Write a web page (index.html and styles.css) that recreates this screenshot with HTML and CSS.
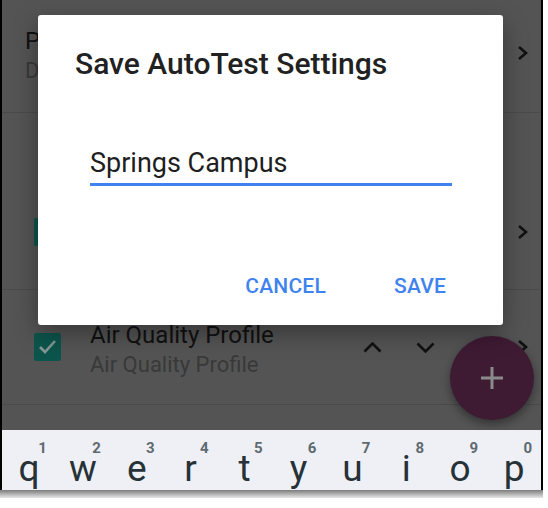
FILE: index.html
```html
<!DOCTYPE html>
<html>
<head>
  <title>Save AutoTest Settings</title>
  <link rel="stylesheet" href="styles.css">
</head>
<body>
  <div class="device">
    <div class="screen">
      <div class="list">
        <div class="row row-top">
          <div class="row-text">
            <div class="row-title">Particle Profile</div>
            <div class="row-sub">Default Profile</div>
          </div>
          <svg class="chevron" width="12" height="16" viewBox="0 0 12 16"><polyline points="2,2 9,8 2,14"/></svg>
        </div>
        <div class="group">
          <div class="row">
            <div class="check"><svg width="27" height="28" viewBox="0 0 27 28"><polyline points="6,14 11,19 21,8"/></svg></div>
            <div class="row-text">
              <div class="row-title">Temperature Profile</div>
              <div class="row-sub">Temperature Profile</div>
            </div>
            <svg class="chevron" width="12" height="16" viewBox="0 0 12 16"><polyline points="2,2 9,8 2,14"/></svg>
          </div>
        </div>
        <div class="row row-aq">
          <div class="check"><svg width="27" height="28" viewBox="0 0 27 28"><polyline points="6,14 11,19 21,8"/></svg></div>
          <div class="row-text">
            <div class="row-title">Air Quality Profile</div>
            <div class="row-sub">Air Quality Profile</div>
          </div>
          <svg class="arrow" width="19" height="11" viewBox="0 0 19 11"><polyline points="1.5,9.5 9.5,1.5 17.5,9.5"/></svg>
          <svg class="arrow arrow-down" width="19" height="11" viewBox="0 0 19 11"><polyline points="1.5,1.5 9.5,9.5 17.5,1.5"/></svg>
          <svg class="chevron" width="12" height="16" viewBox="0 0 12 16"><polyline points="2,2 9,8 2,14"/></svg>
        </div>
        <div class="row row-last"></div>
      </div>

      <div class="fab">
        <svg width="22" height="22" viewBox="0 0 22 22"><line x1="11" y1="0" x2="11" y2="22"/><line x1="0" y1="11" x2="22" y2="11"/></svg>
      </div>

      <div class="dialog">
        <h2 class="dialog-title">Save AutoTest Settings</h2>
        <div class="field">Springs Campus</div>
        <div class="actions">
          <span class="btn">CANCEL</span>
          <span class="btn">SAVE</span>
        </div>
      </div>
    </div>

    <div class="keyboard">
      <div class="key"><span class="num">1</span>q</div>
      <div class="key"><span class="num">2</span>w</div>
      <div class="key"><span class="num">3</span>e</div>
      <div class="key"><span class="num">4</span>r</div>
      <div class="key"><span class="num">5</span>t</div>
      <div class="key"><span class="num">6</span>y</div>
      <div class="key"><span class="num">7</span>u</div>
      <div class="key"><span class="num">8</span>i</div>
      <div class="key"><span class="num">9</span>o</div>
      <div class="key"><span class="num">0</span>p</div>
    </div>
  </div>
  <div class="kb-shadow"></div>
</body>
</html>
```

FILE: styles.css
```css
body {
  margin: 0;
  background-color: #ffffff;
  font-family: Roboto, "Liberation Sans", sans-serif;
}

.device {
  width: 539px;
  border-left: 2px solid #000;
  border-right: 2px solid #000;
}

.screen {
  position: relative;
  height: 430px;
  background-color: #545454;
  overflow: hidden;
}

.row {
  display: flex;
  align-items: center;
  border-bottom: 1px solid #4a4a4a;
  padding-right: 12px;
}

.row-top {
  height: 112px;
  padding-left: 23px;
}

.row-top .chevron {
  margin-bottom: 6px;
}

.group {
  height: 176px;
  border-bottom: 1px solid #4a4a4a;
  display: flex;
  flex-direction: column;
  justify-content: flex-end;
}

.group .row {
  height: 114px;
  border-bottom: none;
}

.row-aq {
  height: 114px;
}

.row-aq .row-text {
  padding-top: 6px;
}

.row-last {
  height: 30px;
  border-bottom: none;
}

.row-text {
  flex: 1;
}

.row-title {
  font-size: 24px;
  line-height: 30px;
  color: #111;
}

.row-sub {
  font-size: 22px;
  line-height: 30px;
  color: #393939;
}

.check {
  width: 27px;
  height: 28px;
  margin: 0 29px 0 32px;
  background-color: #0c554c;
  border-radius: 2px;
}

.check svg polyline {
  fill: none;
  stroke: #849592;
  stroke-width: 2.6;
}

.chevron polyline,
.arrow polyline {
  fill: none;
  stroke: #111;
  stroke-width: 2.6;
}

.chevron {
  margin-left: 4px;
}

.arrow {
  margin-right: 34px;
}

.arrow-down {
  margin-right: 78px;
}

.fab {
  position: absolute;
  left: 448px;
  top: 336px;
  width: 84px;
  height: 84px;
  border-radius: 50%;
  background-color: #3e1a33;
  box-shadow: 0 4px 10px rgba(0, 0, 0, 0.4);
  display: flex;
  align-items: center;
  justify-content: center;
}

.fab svg line {
  stroke: #8a8a8a;
  stroke-width: 3;
}

.dialog {
  position: absolute;
  left: 36px;
  top: 15px;
  width: 465px;
  height: 310px;
  box-sizing: border-box;
  padding: 31px 57px 0 37px;
  background-color: #fff;
  border-radius: 3px;
  box-shadow: 0 8px 24px rgba(0, 0, 0, 0.35);
}

.dialog-title {
  margin: 0;
  font-size: 30px;
  line-height: 36px;
  font-weight: 500;
  color: #212121;
}

.field {
  margin: 65px 0 0 15px;
  width: 362px;
  font-size: 27px;
  line-height: 32px;
  color: #1e1e1e;
  padding-bottom: 4px;
  border-bottom: 3px solid #3f83f0;
}

.actions {
  display: flex;
  justify-content: flex-end;
  gap: 68px;
  margin-top: 88px;
}

.btn {
  font-size: 21px;
  font-weight: 500;
  color: #3f83f0;
  letter-spacing: 0.2px;
}

.keyboard {
  display: grid;
  grid-template-columns: repeat(10, 1fr);
  height: 60px;
  background-color: #eef0f5;
  overflow: hidden;
}

.key {
  position: relative;
  text-align: center;
  font-size: 37px;
  line-height: 26px;
  padding-top: 26px;
  color: #263238;
}

.num {
  position: absolute;
  top: 12px;
  right: 9px;
  font-size: 15px;
  line-height: 12px;
  font-weight: 700;
  color: #5f6a70;
}

.kb-shadow {
  width: 543px;
  height: 8px;
  background: linear-gradient(#7c7c7c, #e6e6e6);
}
```
